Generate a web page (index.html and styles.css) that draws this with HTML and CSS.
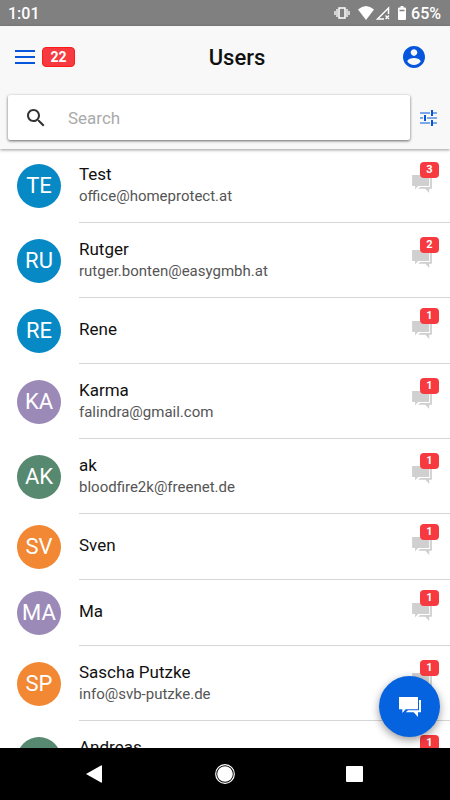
FILE: index.html
```html
<!DOCTYPE html>
<html lang="en">
<head>
<meta charset="utf-8">
<meta name="viewport" content="width=device-width, initial-scale=1">
<title>Users</title>
<link rel="stylesheet" href="styles.css">
</head>
<body>
<svg class="defs" aria-hidden="true">
  <symbol id="chat" viewBox="0 0 66 60">
    <path d="M0 0H57V37H20L10 48V37H0Z"/>
    <path d="M60 9H66V46H57V60L44 46H20L27 40H60Z"/>
  </symbol>
</svg>
<div class="status">
  <span class="clock">1:01</span>
  <svg class="vibrate" viewBox="0 0 16 14"><path d="M5 2h6v10H5z" fill="none" stroke="currentColor" stroke-width="1.5"/><path d="M3 3v8M13 3v8M1 5v4M15 5v4" stroke="currentColor" stroke-width="1.3"/></svg>
  <svg class="wifi" viewBox="0 0 16 14"><path d="M8 14L0 3.500Q8-3.500 16 3.500Z" fill="currentColor"/></svg>
  <svg class="signal" viewBox="0 0 14 14"><path d="M8 13H1.500L12.500 2V8" fill="none" stroke="currentColor" stroke-width="1.500"/><path d="M9.500 9.500l3.500 3.500M13 9.500L9.500 13" stroke="currentColor" stroke-width="1.300"/></svg>
  <svg class="battery" viewBox="0 0 8 14"><path d="M2.500 0h3v1.500H7Q8 1.500 8 2.500V13Q8 14 7 14H1Q0 14 0 13V2.500Q0 1.500 1 1.500H2.500Z" fill="currentColor"/><path d="M1.500 4.500h5" stroke="#808080" stroke-width="1.500"/></svg>
  <span class="charge">65%</span>
</div>
<header class="header">
  <div class="toolbar">
    <div class="side">
      <button class="icon-button" aria-label="Menu"><svg class="menu" viewBox="0 0 20 14"><path d="M0 1h20M0 7h20M0 13h20" stroke="currentColor" stroke-width="2"/></svg></button>
      <span class="total">22</span>
    </div>
    <h1 class="title">Users</h1>
    <div class="side side-end">
      <button class="icon-button" aria-label="Account"><svg class="account" viewBox="2 2 20 20"><path fill="currentColor" d="M12 2C6.480 2 2 6.480 2 12s4.480 10 10 10 10-4.480 10-10S17.520 2 12 2zm0 3c1.660 0 3 1.340 3 3s-1.340 3-3 3-3-1.340-3-3 1.340-3 3-3zm0 14.200c-2.500 0-4.710-1.280-6-3.220.030-1.990 4-3.080 6-3.080 1.990 0 5.970 1.090 6 3.080-1.290 1.940-3.500 3.220-6 3.220z"/></svg></button>
    </div>
  </div>
  <div class="search-row">
    <label class="search">
      <svg class="glass" viewBox="3 3 18 18"><path fill="currentColor" d="M15.500 14h-.790l-.280-.270C15.410 12.590 16 11.110 16 9.500 16 5.910 13.090 3 9.500 3S3 5.910 3 9.500 5.910 16 9.500 16c1.610 0 3.090-.590 4.230-1.570l.270.280v.790l5 4.990L20.490 19l-4.990-5zm-6 0C7.010 14 5 11.990 5 9.500S7.010 5 9.500 5 14 7.010 14 9.500 11.990 14 9.500 14z"/></svg>
      <input class="search-input" type="search" placeholder="Search" aria-label="Search">
    </label>
    <button class="icon-button" aria-label="Filter"><svg class="tune" viewBox="0 0 17 16"><path d="M0 3h10M13 3h4M0 8h3M7 8h10M0 13h10M13 13h4" stroke="currentColor" stroke-width="1.200"/><path d="M12 0v6M5 5v6M12 10v6" stroke="currentColor" stroke-width="2"/></svg></button>
  </div>
</header>
<main class="main">
  <ul class="list">
    <li class="user"><span class="avatar blue">TE</span><div class="entry"><div class="who"><div class="name">Test</div><div class="mail">office@homeprotect.at</div></div><span class="chat"><svg class="chat-icon"><use href="#chat"/></svg><span class="count">3</span></span></div></li>
    <li class="user"><span class="avatar blue">RU</span><div class="entry"><div class="who"><div class="name">Rutger</div><div class="mail">rutger.bonten@easygmbh.at</div></div><span class="chat"><svg class="chat-icon"><use href="#chat"/></svg><span class="count">2</span></span></div></li>
    <li class="user short"><span class="avatar blue">RE</span><div class="entry"><div class="who"><div class="name">Rene</div></div><span class="chat"><svg class="chat-icon"><use href="#chat"/></svg><span class="count">1</span></span></div></li>
    <li class="user"><span class="avatar purple">KA</span><div class="entry"><div class="who"><div class="name">Karma</div><div class="mail">falindra@gmail.com</div></div><span class="chat"><svg class="chat-icon"><use href="#chat"/></svg><span class="count">1</span></span></div></li>
    <li class="user"><span class="avatar green">AK</span><div class="entry"><div class="who"><div class="name">ak</div><div class="mail">bloodfire2k@freenet.de</div></div><span class="chat"><svg class="chat-icon"><use href="#chat"/></svg><span class="count">1</span></span></div></li>
    <li class="user short"><span class="avatar orange">SV</span><div class="entry"><div class="who"><div class="name">Sven</div></div><span class="chat"><svg class="chat-icon"><use href="#chat"/></svg><span class="count">1</span></span></div></li>
    <li class="user short"><span class="avatar purple">MA</span><div class="entry"><div class="who"><div class="name">Ma</div></div><span class="chat"><svg class="chat-icon"><use href="#chat"/></svg><span class="count">1</span></span></div></li>
    <li class="user"><span class="avatar orange">SP</span><div class="entry"><div class="who"><div class="name">Sascha Putzke</div><div class="mail">info@svb-putzke.de</div></div><span class="chat"><svg class="chat-icon"><use href="#chat"/></svg><span class="count">1</span></span></div></li>
    <li class="user"><span class="avatar green"></span><div class="entry"><div class="who"><div class="name">Andreas</div><div class="mail">&nbsp;</div></div><span class="chat"><svg class="chat-icon"><use href="#chat"/></svg><span class="count">1</span></span></div></li>
  </ul>
  <button class="fab" aria-label="New chat"><svg class="fab-icon"><use href="#chat"/></svg></button>
</main>
<nav class="nav">
  <button class="nav-button" aria-label="Back"><svg class="nav-icon" viewBox="0 0 20 20"><path d="M1 10L16 1.500Q17 1 17 2V18Q17 19 16 18.500Z" fill="#fff"/></svg></button>
  <button class="nav-button" aria-label="Home"><svg class="nav-icon" viewBox="0 0 20 20"><circle cx="10" cy="10" r="9.300" fill="none" stroke="#fff" stroke-width="1.200"/><circle cx="10" cy="10" r="7.800" fill="#fff"/></svg></button>
  <button class="nav-button" aria-label="Recent apps"><svg class="nav-icon" viewBox="0 0 20 20"><rect x="1" y="2" width="17" height="16" rx="1" fill="#fff"/></svg></button>
</nav>
</body>
</html>
```
FILE: styles.css
```css
* {
  box-sizing: border-box;
}

body {
  margin: 0;
  height: 100vh;
  display: flex;
  flex-direction: column;
  background: #fff;
  color: #111;
  font-family: Roboto, sans-serif;
}

button {
  border: 0;
  padding: 0;
  background: none;
  cursor: pointer;
}

svg {
  display: block;
}

.defs {
  display: none;
}

.status {
  flex: none;
  display: flex;
  align-items: center;
  height: 26px;
  padding: 0 9px 0 8px;
  background: #808080;
  color: #fff;
  font-size: 16px;
  font-weight: 500;
}

.clock {
  flex: 1;
}

.vibrate {
  width: 16px;
  height: 14px;
  margin-right: 8px;
}

.wifi {
  width: 16px;
  height: 14px;
  margin-right: 2px;
}

.signal {
  width: 14px;
  height: 14px;
  margin-right: 8px;
}

.battery {
  width: 8px;
  height: 14px;
  margin-right: 5px;
}

.header {
  flex: none;
  position: relative;
  z-index: 1;
  padding-bottom: 9px;
  background: #f8f8f8;
  box-shadow: 0 1px 3px rgba(0, 0, 0, 0.4);
}

.toolbar {
  display: flex;
  align-items: center;
  height: 62px;
  padding: 0 25px 0 15px;
}

.side {
  flex: 1;
  display: flex;
  align-items: center;
  gap: 7px;
}

.side-end {
  justify-content: flex-end;
}

.icon-button {
  color: #0556dc;
}

.menu {
  width: 20px;
  height: 14px;
}

.total {
  width: 33px;
  border: 1px solid #ff1a1a;
  border-radius: 4px;
  background: #f73a3f;
  color: #fff;
  font-size: 14px;
  font-weight: 700;
  line-height: 18px;
  text-align: center;
}

.title {
  margin: 0;
  padding-left: 34px;
  font-size: 22px;
  font-weight: 500;
}

.account {
  width: 22px;
  height: 22px;
}

.search-row {
  display: flex;
  align-items: center;
  gap: 10px;
  padding: 7px 13px 0 8px;
}

.search {
  flex: 1;
  display: flex;
  align-items: center;
  gap: 23px;
  height: 45px;
  padding: 0 19px;
  border-radius: 2px;
  background: #fff;
  box-shadow: 0 1px 3px rgba(0, 0, 0, 0.6);
}

.glass {
  width: 18px;
  height: 18px;
  color: #333;
}

.search-input {
  flex: 1;
  min-width: 0;
  border: 0;
  padding: 0;
  outline: 0;
  background: none;
  font: 17px Roboto, sans-serif;
}

.search-input::placeholder {
  color: #aaa;
}

.tune {
  width: 17px;
  height: 16px;
}

.main {
  flex: 1;
  min-height: 0;
  position: relative;
  margin-top: -1px;
  overflow: hidden;
}

.list {
  margin: 0;
  padding: 0;
  list-style: none;
}

.user {
  display: flex;
  align-items: center;
  height: 75px;
  padding-left: 17px;
}

.short {
  height: 66px;
}

.avatar {
  flex: none;
  width: 44px;
  height: 44px;
  margin-right: 18px;
  border-radius: 50%;
  color: #fff;
  font-size: 22px;
  line-height: 44px;
  text-align: center;
}

.blue {
  background: #0689c5;
}

.purple {
  background: #9b89b8;
}

.green {
  background: #56896f;
}

.orange {
  background: #f28734;
}

.entry {
  flex: 1;
  align-self: stretch;
  display: flex;
  align-items: center;
  border-bottom: 1px solid #d6d6d6;
}

.who {
  flex: 1;
}

.short .who {
  padding-bottom: 4px;
}

.name {
  font-size: 17px;
  line-height: 22px;
}

.mail {
  color: #555;
  font-size: 15px;
  line-height: 22px;
}

.chat {
  position: relative;
  margin: 0 18px 2px 0;
}

.chat-icon {
  width: 20px;
  height: 18px;
  fill: #d0d0d0;
}

.count {
  position: absolute;
  top: -13px;
  left: 8px;
  width: 19px;
  border-radius: 4px;
  background: #f73a3f;
  color: #fff;
  font-size: 11px;
  font-weight: 700;
  line-height: 16px;
  text-align: center;
}

.fab {
  position: absolute;
  right: 10px;
  bottom: 11px;
  display: grid;
  place-items: center;
  width: 61px;
  height: 61px;
  border-radius: 50%;
  background: #0563df;
  box-shadow: 0 3px 8px rgba(0, 0, 0, 0.4);
}

.fab-icon {
  width: 22px;
  height: 20px;
  fill: #fff;
}

.nav {
  flex: none;
  display: flex;
  justify-content: center;
  gap: 110px;
  height: 52px;
  background: #000;
}

.nav-icon {
  width: 20px;
  height: 20px;
}
```
